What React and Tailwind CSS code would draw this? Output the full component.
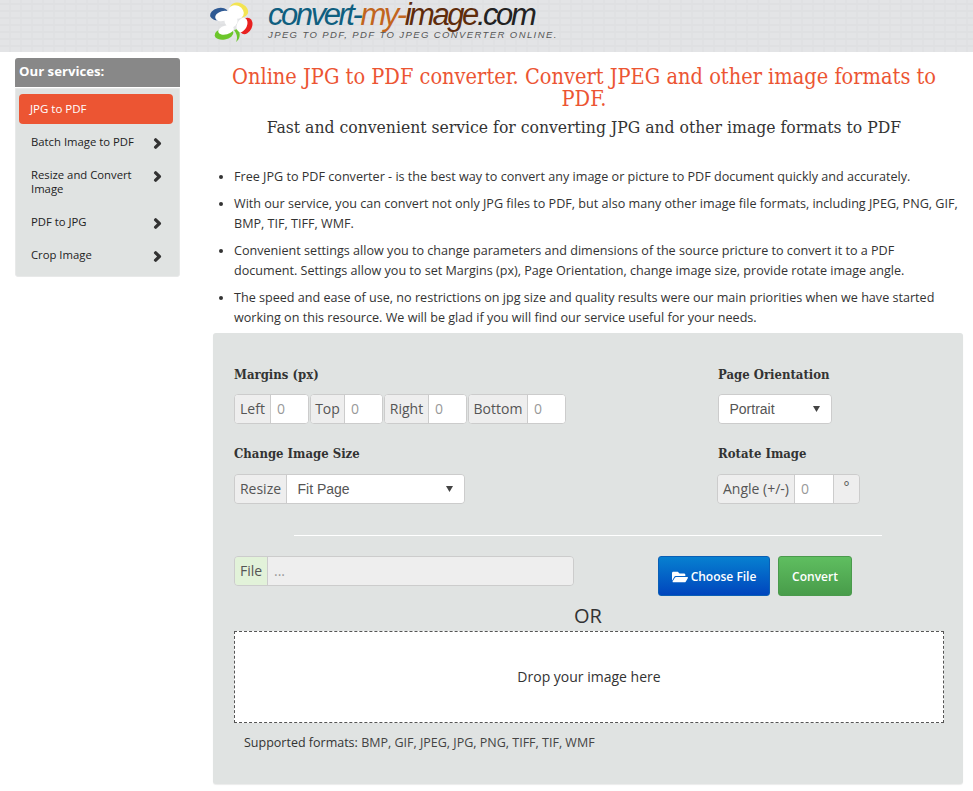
import { FaChevronRight, FaFolderOpen } from 'react-icons/fa';

const sans = "font-['Open_Sans',sans-serif]";
const slab = "font-['DejaVu_Serif_Condensed','DejaVu_Serif',serif]";

const services = ['Batch Image to PDF', 'Resize and Convert Image', 'PDF to JPG', 'Crop Image'];

const bullets = [
  'Free JPG to PDF converter - is the best way to convert any image or picture to PDF document quickly and accurately.',
  'With our service, you can convert not only JPG files to PDF, but also many other image file formats, including JPEG, PNG, GIF, BMP, TIF, TIFF, WMF.',
  'Convenient settings allow you to change parameters and dimensions of the source pricture to convert it to a PDF document. Settings allow you to set Margins (px), Page Orientation, change image size, provide rotate image angle.',
  'The speed and ease of use, no restrictions on jpg size and quality results were our main priorities when we have started working on this resource. We will be glad if you will find our service useful for your needs.',
];

function Logo() {
  return (
    <svg width="46" height="44" viewBox="0 0 46 44" className="shrink-0">
      <ellipse cx="10" cy="13" rx="9" ry="6" transform="rotate(-15 10 13)" fill="#2f5a94" />
      <ellipse cx="30" cy="9" rx="9.5" ry="7" transform="rotate(25 30 9)" fill="#f3e452" />
      <ellipse cx="37" cy="25" rx="6" ry="8.5" transform="rotate(25 37 25)" fill="#e8201f" />
      <ellipse cx="15" cy="33" rx="9.5" ry="5.5" transform="rotate(-10 15 33)" fill="#6cc62a" />
      <path d="M25 29 C28 33 29 37 27 41 C31 38 32 33 29 28 Z" fill="#6cc62a" />
      <ellipse cx="14" cy="15" rx="8" ry="5" transform="rotate(-15 14 15)" fill="#fff" />
      <ellipse cx="27" cy="11" rx="8" ry="6.5" transform="rotate(25 27 11)" fill="#fff" />
      <ellipse cx="33" cy="24" rx="5" ry="7.5" transform="rotate(25 33 24)" fill="#fff" />
      <ellipse cx="17" cy="29" rx="8" ry="4.5" transform="rotate(-15 17 29)" fill="#fff" />
      <circle cx="22" cy="20" r="6.5" fill="#fff" />
    </svg>
  );
}

function InputGroup({ label, width }) {
  return (
    <div className={`flex h-[30px] ${width} rounded border border-[#ccc] overflow-hidden bg-white`}>
      <span className="flex items-center justify-center grow bg-[#eee] border-r border-[#ccc] text-sm text-[#555]">{label}</span>
      <input placeholder="0" className="w-[37px] px-[6px] text-sm bg-white outline-none placeholder:text-[#999]" />
    </div>
  );
}

function Select({ value, width }) {
  return (
    <div className={`relative ${width}`}>
      <select defaultValue={value} className="appearance-none w-full h-[28px] pl-[10.5px] bg-white text-sm text-[#555] font-['Liberation_Sans',sans-serif] outline-none">
        <option>{value}</option>
      </select>
      <svg width="7" height="6" viewBox="0 0 7 6" className="absolute right-[11px] top-[11px] pointer-events-none">
        <path d="M0 0 H7 L3.5 6 Z" fill="#444" />
      </svg>
    </div>
  );
}

export default function App() {
  return (
    <div className={`${sans} bg-white min-h-[791px] text-[#333]`}>
      <header className="h-[52px] pl-[209px] flex items-start bg-[#e3e4e6] bg-[repeating-linear-gradient(0deg,transparent_0,transparent_5px,#dfe0e2_5px,#dfe0e2_7px),repeating-linear-gradient(90deg,transparent_0,transparent_9px,#e0e1e3_9px,#e0e1e3_11px)] overflow-hidden">
        <div className="mt-[1px]"><Logo /></div>
        <div className="ml-[13px] flex flex-col">
          <div className="font-['Liberation_Sans',sans-serif] italic text-[31px] leading-[30px] tracking-[-2.45px] whitespace-nowrap">
            <span className="text-[#0f5f80]">convert-</span>
            <span className="text-[#c2651d]">my-</span>
            <span className="text-[#5f2c0c]">image</span>
            <span className="text-[#222]">.com</span>
          </div>
          <div className="font-['Liberation_Sans',sans-serif] italic text-[9.5px] leading-[10px] tracking-[1.4px] text-[#555] whitespace-nowrap">JPEG TO PDF, PDF TO JPEG CONVERTER ONLINE.</div>
        </div>
      </header>

      <div className="flex items-start">
        <aside className="w-[165px] ml-[15px] mt-[6px] shrink-0">
          <div className="h-[29px] flex items-center pl-[4px] pb-[1px] bg-[#888] rounded-t-[3px] text-white text-[13.2px] font-bold">Our services:</div>
          <nav className="mt-[1px] h-[189px] bg-[#e0e3e2] rounded-b-[3px] border border-[#e8e9e9] pt-[5px] px-[3px] flex flex-col text-[11.3px] leading-[14px] text-[#222]">
            <a className="w-[154px] h-[30px] flex items-center pl-[11px] bg-[#ec5533] rounded text-white text-[11.5px]">JPG to PDF</a>
            <ul className="flex flex-col">
              {services.map((s) => (
                <li key={s} className="flex justify-between items-start pl-[12px] pr-[13px] pt-[11px] pb-[8px]">
                  <span className="w-[108px]">{s}</span>
                  <FaChevronRight size={11} className="text-[#333] mt-[3px] [stroke-width:70px]" />
                </li>
              ))}
            </ul>
          </nav>
        </aside>

        <main className="ml-[33px] w-[750px] shrink-0">
          <h1 className={`mt-[14px] pr-[8px] text-center ${slab} text-[21.6px] leading-[22px] text-[#ec5533]`}>Online JPG to PDF converter. Convert JPEG and other image formats to PDF.</h1>
          <h2 className={`mt-[6px] pr-[8px] text-center ${slab} text-[17.4px] leading-[22px] text-[#333]`}>Fast and convenient service for converting JPG and other image formats to PDF</h2>

          <ul className="mt-[29px] pl-[21px] pr-[3px] list-disc text-[12.6px] leading-[20px] text-[#333]">
            {bullets.map((b) => (
              <li key={b} className="mb-[7px] last:mb-0">{b}</li>
            ))}
          </ul>

          <section className="mt-[5px] h-[451px] bg-[#e0e3e2] rounded-[3px] shadow-[0_1px_1px_rgba(0,0,0,0.08)] pt-[33px] px-[21px]">
            <div className="flex">
              <div className="w-[484px] shrink-0">
                <h3 className={`${slab} font-bold text-[13px] leading-[18px]`}>Margins (px)</h3>
                <div className="mt-[10px] flex gap-[1px]">
                  <InputGroup label="Left" width="w-[75px]" />
                  <InputGroup label="Top" width="w-[73px]" />
                  <InputGroup label="Right" width="w-[83px]" />
                  <InputGroup label="Bottom" width="w-[98px]" />
                </div>
                <h3 className={`mt-[21px] ${slab} font-bold text-[13px] leading-[18px]`}>Change Image Size</h3>
                <div className="mt-[11px] flex w-[231px] h-[30px] rounded border border-[#ccc] overflow-hidden">
                  <span className="w-[52px] flex items-center justify-center bg-[#eee] border-r border-[#ccc] text-sm text-[#555]">Resize</span>
                  <Select value="Fit Page" width="grow" />
                </div>
              </div>
              <div>
                <h3 className={`${slab} font-bold text-[13px] leading-[18px]`}>Page Orientation</h3>
                <div className="mt-[10px] w-[114px] h-[30px] rounded border border-[#ccc] overflow-hidden">
                  <Select value="Portrait" width="w-full" />
                </div>
                <h3 className={`mt-[21px] ${slab} font-bold text-[13px] leading-[18px]`}>Rotate Image</h3>
                <div className="mt-[11px] ml-[-1px] flex w-[143px] h-[30px] rounded border border-[#ccc] overflow-hidden">
                  <span className="w-[77px] flex items-center justify-center bg-[#eee] border-r border-[#ccc] text-sm text-[#555] whitespace-nowrap">Angle (+/-)</span>
                  <input placeholder="0" className="w-[38px] px-[6px] text-sm bg-white outline-none placeholder:text-[#999]" />
                  <span className="grow flex items-center justify-center bg-[#eee] border-l border-[#ccc] text-sm text-[#555] pb-[4px]">°</span>
                </div>
              </div>
            </div>

            <hr className="mt-[31px] ml-[60px] w-[588px] border-0 border-t border-[#fff]" />

            <div className="mt-[20px] flex items-start">
              <div className="flex w-[340px] h-[30px] rounded border border-[#ccc] overflow-hidden">
                <span className="w-[33px] flex items-center justify-center bg-[#e2f2d9] border-r border-[#ccc] text-sm text-[#555]">File</span>
                <input placeholder="..." readOnly className="grow px-[6px] text-sm bg-[#eee] outline-none placeholder:text-[#999]" />
              </div>
              <button className="ml-[84px] w-[112px] h-[40px] pt-[2px] flex items-center justify-center gap-[3px] rounded-[3px] text-white text-xs font-semibold bg-[linear-gradient(#0780d0,#0045bd)] border border-[#0a5fb5]">
                <FaFolderOpen size={16} />
                Choose File
              </button>
              <button className="ml-[8px] w-[74px] h-[40px] pt-[2px] rounded-[3px] text-white text-xs font-semibold bg-[linear-gradient(#5fbe60,#489c4a)] border border-[#4a9a4c]">Convert</button>
            </div>

            <div className="mt-[6px] text-center text-xl leading-[28px]">OR</div>
            <div className="mt-[1px] h-[92px] w-[710px] flex items-center justify-center bg-white border border-dashed border-[#555] text-sm">Drop your image here</div>
            <p className="mt-[11px] ml-[10px] text-[12.5px] leading-[18px]">
              <span className="font-medium">Supported formats:</span> <span className="text-[#444]">BMP, GIF, JPEG, JPG, PNG, TIFF, TIF, WMF</span>
            </p>
          </section>
        </main>
      </div>
    </div>
  );
}
